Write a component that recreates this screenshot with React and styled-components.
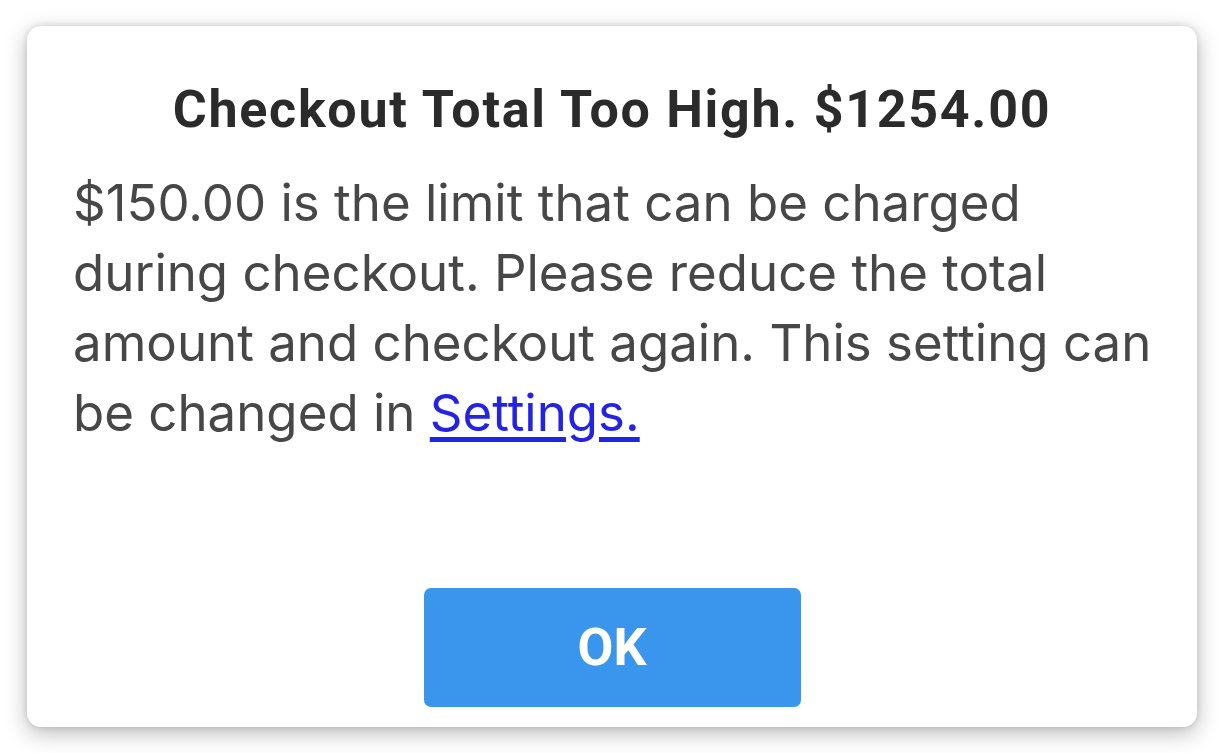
import React from "react";
import styled, { createGlobalStyle } from "styled-components";

const GlobalStyle = createGlobalStyle`
  html, body {
    margin: 0;
    padding: 0;
    background: #ffffff;
  }
  body {
    font-family: Roboto, "Liberation Sans", sans-serif;
  }
`;

const Page = styled.div`
  box-sizing: border-box;
  width: 1223px;
  height: 753px;
  padding: 26px 26px 26px 27px;
  display: flex;
`;

const Dialog = styled.section`
  flex: 1;
  display: flex;
  flex-direction: column;
  background: #ffffff;
  border-radius: 14px;
  box-shadow: 0 6px 22px rgba(0, 0, 0, 0.28), 0 0 6px rgba(0, 0, 0, 0.12);
  padding: 54px 44px 20px 44px;
`;

const Title = styled.h1`
  margin: 0;
  text-align: center;
  font-size: 52px;
  font-weight: 700;
  letter-spacing: 1.7px;
  color: #2b2b2b;
  line-height: 60px;
`;

const Message = styled.p`
  margin: 28px 0 0 2px;
  font-family: Inter, Roboto, sans-serif;
  font-size: 51px;
  line-height: 70px;
  white-space: nowrap;
  color: #474747;
`;

const Link = styled.a`
  color: #2323e6;
  text-decoration: underline;
  text-underline-offset: 6px;
`;

const Actions = styled.div`
  margin-top: auto;
  display: flex;
  justify-content: center;
`;

const Button = styled.button`
  width: 377px;
  height: 119px;
  border: none;
  border-radius: 7px;
  background: #3a96ec;
  color: #ffffff;
  font-family: Roboto, "Liberation Sans", sans-serif;
  font-size: 52px;
  font-weight: 700;
  cursor: pointer;
`;

export default function App() {
  return (
    <Page>
      <GlobalStyle />
      <Dialog>
        <Title>Checkout Total Too High. $1254.00</Title>
        <Message>
          $150.00 is the limit that can be charged
          <br />
          during checkout. Please reduce the total
          <br />
          amount and checkout again. This setting can
          <br />
          be changed in <Link href="#">Settings.</Link>
        </Message>
        <Actions>
          <Button>OK</Button>
        </Actions>
      </Dialog>
    </Page>
  );
}
